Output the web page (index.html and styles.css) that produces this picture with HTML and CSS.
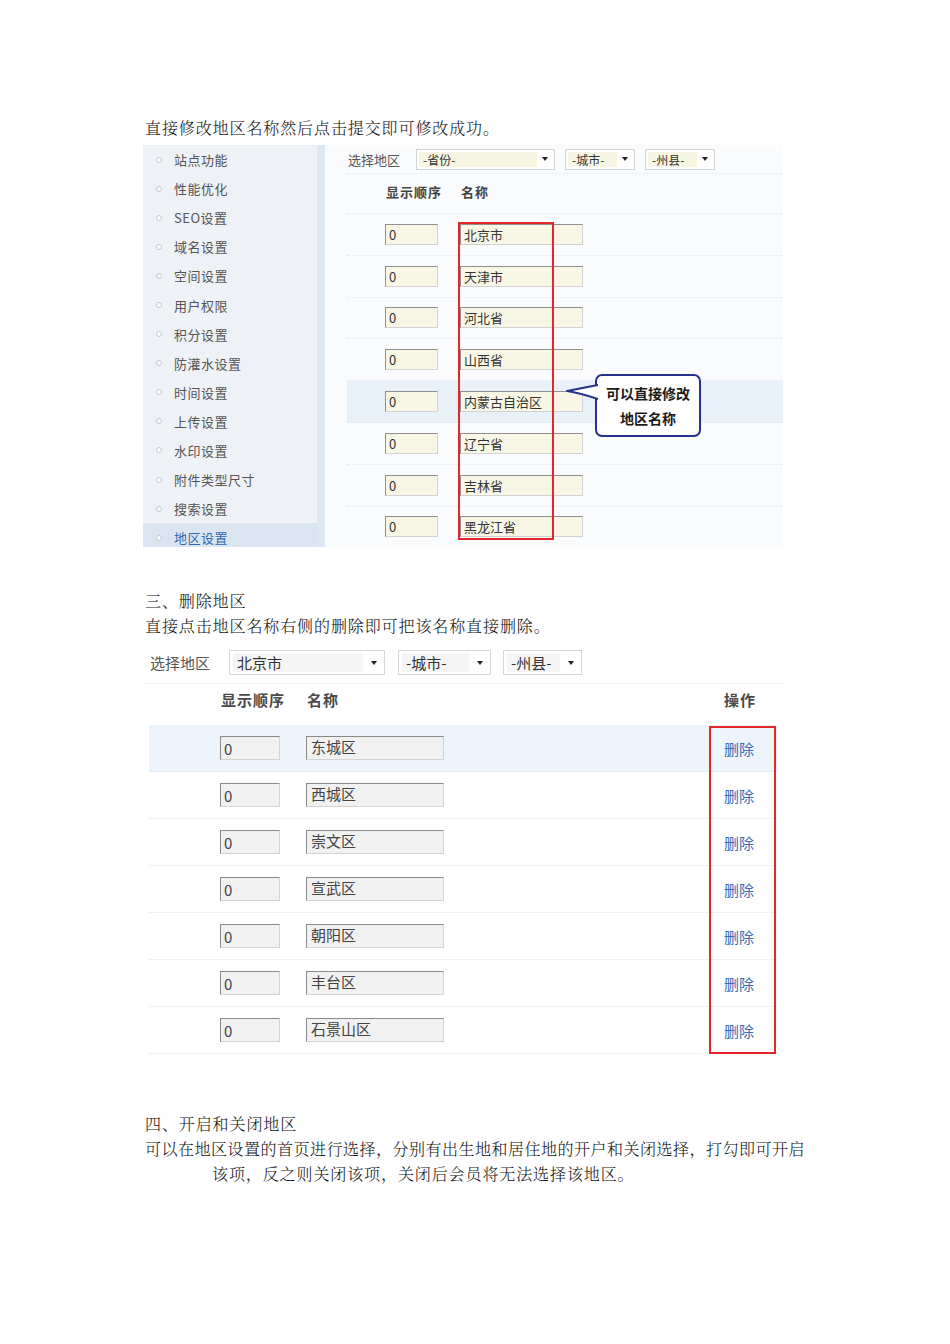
FILE: index.html
```html
<!DOCTYPE html>
<html lang="zh-CN">
<head>
<meta charset="utf-8">
<title>地区设置说明</title>
<link rel="stylesheet" href="styles.css">
</head>
<body>
<div class="doc">
  <p class="para">直接修改地区名称然后点击提交即可修改成功。</p>

  <div class="shot shot-edit">
    <ul class="side-nav">
      <li class="nav-item">站点功能</li>
      <li class="nav-item">性能优化</li>
      <li class="nav-item">SEO设置</li>
      <li class="nav-item">域名设置</li>
      <li class="nav-item">空间设置</li>
      <li class="nav-item">用户权限</li>
      <li class="nav-item">积分设置</li>
      <li class="nav-item">防灌水设置</li>
      <li class="nav-item">时间设置</li>
      <li class="nav-item">上传设置</li>
      <li class="nav-item">水印设置</li>
      <li class="nav-item">附件类型尺寸</li>
      <li class="nav-item">搜索设置</li>
      <li class="nav-item is-active">地区设置</li>
    </ul>

    <div class="edit-panel">
      <div class="edit-filter">
        <span class="edit-label">选择地区</span>
        <span class="pick pick-province"><span class="pick-text">-省份-</span><span class="pick-arrow"></span></span>
        <span class="pick pick-small"><span class="pick-text">-城市-</span><span class="pick-arrow"></span></span>
        <span class="pick pick-small"><span class="pick-text">-州县-</span><span class="pick-arrow"></span></span>
      </div>
      <div class="edit-head">
        <span class="edit-col-order">显示顺序</span>
        <span>名称</span>
      </div>
      <div class="edit-row"><span class="field field-order">0</span><span class="field field-name">北京市</span></div>
      <div class="edit-row"><span class="field field-order">0</span><span class="field field-name">天津市</span></div>
      <div class="edit-row"><span class="field field-order">0</span><span class="field field-name">河北省</span></div>
      <div class="edit-row"><span class="field field-order">0</span><span class="field field-name">山西省</span></div>
      <div class="edit-row is-hover"><span class="field field-order">0</span><span class="field field-name">内蒙古自治区</span></div>
      <div class="edit-row"><span class="field field-order">0</span><span class="field field-name">辽宁省</span></div>
      <div class="edit-row"><span class="field field-order">0</span><span class="field field-name">吉林省</span></div>
      <div class="edit-row"><span class="field field-order">0</span><span class="field field-name">黑龙江省</span></div>
    </div>

    <div class="mark mark-names"></div>
    <svg class="callout-tail" width="32" height="16" viewBox="0 0 32 16" aria-hidden="true">
      <path d="M32 1 L1 7 Q14 9 32 15" fill="#fff" stroke="#27308a" stroke-width="2" stroke-linejoin="round"/>
    </svg>
    <div class="callout">可以直接修改<br>地区名称</div>
  </div>

  <p class="para para-section">三、删除地区</p>
  <p class="para">直接点击地区名称右侧的删除即可把该名称直接删除。</p>

  <div class="shot shot-del">
    <div class="del-filter">
      <span class="del-label">选择地区</span>
      <span class="pick2 pick2-province"><span class="pick2-text">北京市</span><span class="pick-arrow"></span></span>
      <span class="pick2 pick2-city"><span class="pick2-text">-城市-</span><span class="pick-arrow"></span></span>
      <span class="pick2 pick2-county"><span class="pick2-text">-州县-</span><span class="pick-arrow"></span></span>
    </div>
    <div class="del-head">
      <span class="del-col-order">显示顺序</span>
      <span class="del-col-name">名称</span>
      <span>操作</span>
    </div>
    <div class="del-row is-hover"><span class="box box-order">0</span><span class="box box-name">东城区</span><a class="del-link">删除</a></div>
    <div class="del-row"><span class="box box-order">0</span><span class="box box-name">西城区</span><a class="del-link">删除</a></div>
    <div class="del-row"><span class="box box-order">0</span><span class="box box-name">崇文区</span><a class="del-link">删除</a></div>
    <div class="del-row"><span class="box box-order">0</span><span class="box box-name">宣武区</span><a class="del-link">删除</a></div>
    <div class="del-row"><span class="box box-order">0</span><span class="box box-name">朝阳区</span><a class="del-link">删除</a></div>
    <div class="del-row"><span class="box box-order">0</span><span class="box box-name">丰台区</span><a class="del-link">删除</a></div>
    <div class="del-row"><span class="box box-order">0</span><span class="box box-name">石景山区</span><a class="del-link">删除</a></div>

    <div class="mark mark-actions"></div>
  </div>

  <p class="para para-section-far">四、开启和关闭地区</p>
  <p class="para para-tight">可以在地区设置的首页进行选择，分别有出生地和居住地的开户和关闭选择，打勾即可开启</p>
  <p class="para para-cont">该项，反之则关闭该项，关闭后会员将无法选择该地区。</p>
</div>
</body>
</html>
```

FILE: styles.css
```css
html, body {
  margin: 0;
  padding: 0;
  background: #fff;
}

.doc {
  padding: 115px 0 0 145px;
}

/* document text */
.para {
  margin: 0;
  font-family: "Noto Serif CJK SC", "Liberation Serif", "Noto Sans CJK SC", serif;
  font-size: 16px;
  font-weight: 300;
  line-height: 25px;
  letter-spacing: 0.9px;
  color: #111;
  white-space: nowrap;
}

.para-tight {
  letter-spacing: 0.5px;
}

.para-section {
  margin-top: 41px;
}

.para-section-far {
  margin-top: 55px;
}

.para-cont {
  margin-left: 67px;
}

/* shared overlay frame */
.shot {
  position: relative;
  font-family: "Noto Sans CJK SC", "Liberation Sans", sans-serif;
}

.mark {
  position: absolute;
  box-sizing: border-box;
  border: 2px solid #e2262c;
}

.pick-arrow {
  width: 0;
  height: 0;
  border-left: 3.5px solid transparent;
  border-right: 3.5px solid transparent;
  border-top: 4px solid #222;
  flex: none;
}

/* ---------- region editing panel ---------- */
.shot-edit {
  display: flex;
  width: 640px;
  height: 402px;
  margin: 5px 0 0 -2px;
  overflow: hidden;
}

.side-nav {
  width: 174px;
  flex: none;
  margin: 0;
  padding: 0;
  list-style: none;
  background: #eef1f5;
  border-right: 8px solid #dbe7f3;
}

.nav-item {
  height: 29.1px;
  display: flex;
  align-items: center;
  gap: 12px;
  padding-left: 13px;
  font-size: 13px;
  letter-spacing: 0.5px;
  color: #555;
}

.nav-item::before {
  content: "";
  width: 4px;
  height: 4px;
  border: 1px solid #c2c7cc;
  border-radius: 50%;
  background: #fff;
  flex: none;
}

.nav-item.is-active {
  background: #dae5f1;
  color: #2f6aae;
}

.edit-panel {
  flex: 1;
  padding-left: 22px;
  background: #fafbfc;
}

.edit-filter {
  box-sizing: border-box;
  height: 29px;
  display: flex;
  align-items: center;
  border-bottom: 1px dotted #e2e8ee;
  font-size: 13px;
  color: #555;
}

.edit-label {
  margin: 0 16px 0 1px;
}

.pick {
  box-sizing: border-box;
  height: 21px;
  display: flex;
  align-items: center;
  padding: 2px 6px 2px 2px;
  margin-right: 10px;
  border: 1px solid #d3d3d3;
  background: #fff;
  font-size: 12px;
  color: #333;
}

.pick-province { width: 139px; }
.pick-small { width: 70px; }

.pick-text {
  flex: 1;
  height: 100%;
  display: flex;
  align-items: center;
  padding-left: 4px;
  margin-right: 5px;
  background: #f7f6e2;
}

.edit-head {
  box-sizing: border-box;
  height: 40px;
  display: flex;
  align-items: center;
  padding: 0 0 4px 39px;
  border-bottom: 1px dotted #e2e8ee;
  font-size: 13px;
  font-weight: 700;
  letter-spacing: 1px;
  color: #444;
}

.edit-col-order {
  width: 75px;
}

.edit-row {
  box-sizing: border-box;
  height: 41.8px;
  display: flex;
  align-items: center;
  gap: 22px;
  padding-left: 38px;
  border-bottom: 1px dotted #e2e8ee;
}

.edit-row.is-hover {
  background: #e8f0f8;
}

.field {
  box-sizing: border-box;
  height: 21px;
  padding-left: 3px;
  border: 1px solid;
  border-color: #8f8f8f #d2d2d2 #d2d2d2 #8f8f8f;
  background: #f8f7e5;
  font-size: 13px;
  line-height: 19px;
  color: #333;
}

.field-order { width: 53px; }
.field-name { width: 123px; }

.mark-names {
  left: 315px;
  top: 77px;
  width: 96px;
  height: 318px;
}

.callout {
  position: absolute;
  left: 452px;
  top: 229px;
  box-sizing: border-box;
  width: 106px;
  height: 63px;
  padding-top: 5px;
  border: 2px solid #27308a;
  border-radius: 7px;
  background: #fff;
  font-size: 14px;
  font-weight: 700;
  line-height: 25px;
  text-align: center;
  color: #1b1b1b;
}

.callout-tail {
  position: absolute;
  left: 423px;
  top: 239px;
  z-index: 1;
}

/* ---------- region deleting panel ---------- */
.shot-del {
  width: 638px;
  height: 414px;
  margin-top: 4px;
  background: #fff;
}

.del-filter {
  box-sizing: border-box;
  height: 42px;
  display: flex;
  align-items: center;
  padding-left: 5px;
  border-bottom: 1px dotted #e6e9ed;
  font-size: 15px;
  color: #555;
}

.del-label {
  margin-right: 19px;
}

.pick2 {
  box-sizing: border-box;
  height: 25px;
  display: flex;
  align-items: center;
  padding: 2px 7px 2px 3px;
  border: 1px solid #d6d6d6;
  background: #fff;
  font-size: 15px;
  color: #333;
}

.pick2-province { width: 156px; margin-right: 13px; }
.pick2-city { width: 93px; margin-right: 12px; }
.pick2-county { width: 79px; }

.pick2-text {
  flex: 1;
  height: 100%;
  display: flex;
  align-items: center;
  padding-left: 4px;
  margin-right: 8px;
  background: #f5f5f5;
}

.del-head {
  box-sizing: border-box;
  height: 41px;
  display: flex;
  align-items: center;
  margin-left: 4px;
  padding: 0 0 10px 72px;
  font-size: 15px;
  font-weight: 700;
  letter-spacing: 1px;
  color: #4a4a4a;
}

.del-col-order { width: 86px; }
.del-col-name { width: 417px; }

.del-row {
  box-sizing: border-box;
  width: 629px;
  height: 47px;
  margin-left: 4px;
  display: grid;
  grid-template-columns: 86px 418px auto;
  align-items: center;
  padding-left: 71px;
  border-bottom: 1px dotted #dfe3e8;
}

.del-row.is-hover {
  background: #eef4fb;
}

.box {
  box-sizing: border-box;
  height: 24px;
  border: 1px solid;
  border-color: #8a8a8a #d3d3d3 #d3d3d3 #8a8a8a;
  background: #f1f1f1;
  font-size: 15px;
  color: #444;
}

.box-order {
  width: 60px;
  padding-left: 3px;
  line-height: 24px;
}

.box-name {
  width: 138px;
  padding-left: 4px;
  line-height: 19px;
}

.del-link {
  font-size: 15px;
  color: #3a6db4;
  text-decoration: none;
}

.mark-actions {
  left: 564px;
  top: 84px;
  width: 67px;
  height: 328px;
}
```
